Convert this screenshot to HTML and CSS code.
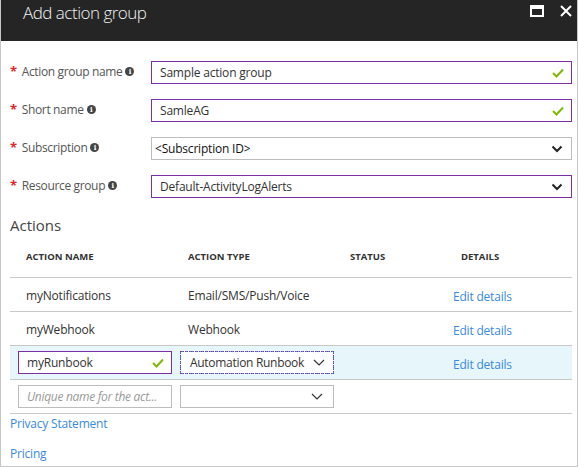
FILE: index.html
```html
<!DOCTYPE html>
<html>
<head>
<meta charset="utf-8">
<link rel="stylesheet" href="styles.css">
</head>
<body>
<div class="window">
  <header class="titlebar">
    <h1 class="title">Add action group</h1>
    <div class="controls">
      <svg class="ctl" width="14" height="12" viewBox="0 0 14 12"><rect x="1" y="1" width="12" height="10" fill="none" stroke="#fff" stroke-width="2"/><rect x="1" y="1" width="12" height="3" fill="#fff"/></svg>
      <svg class="ctl" width="12" height="12" viewBox="0 0 12 12"><path d="M1 1 L11 11 M11 1 L1 11" stroke="#fff" stroke-width="2"/></svg>
    </div>
  </header>

  <div class="content">
    <div class="form">
      <div class="frow">
        <div class="label"><span class="req">*</span>Action group name<span class="info">i</span></div>
        <div class="field active"><span class="val">Sample action group</span><svg class="check" width="12" height="10" viewBox="0 0 12 10"><path d="M1 5 L4.5 8.5 L11 1.5" fill="none" stroke="#7fba00" stroke-width="2"/></svg></div>
      </div>
      <div class="frow">
        <div class="label"><span class="req">*</span>Short name<span class="info">i</span></div>
        <div class="field active"><span class="val">SamleAG</span><svg class="check" width="12" height="10" viewBox="0 0 12 10"><path d="M1 5 L4.5 8.5 L11 1.5" fill="none" stroke="#7fba00" stroke-width="2"/></svg></div>
      </div>
      <div class="frow">
        <div class="label"><span class="req">*</span>Subscription<span class="info">i</span></div>
        <div class="field plain"><span class="val sub">&lt;Subscription ID&gt;</span><svg class="chev" width="12" height="8" viewBox="0 0 12 8"><path d="M1.5 1.5 L6 6 L10.5 1.5" fill="none" stroke="#222" stroke-width="2"/></svg></div>
      </div>
      <div class="frow">
        <div class="label"><span class="req">*</span>Resource group<span class="info">i</span></div>
        <div class="field active"><span class="val">Default-ActivityLogAlerts</span><svg class="chev" width="12" height="8" viewBox="0 0 12 8"><path d="M1.5 1.5 L6 6 L10.5 1.5" fill="none" stroke="#222" stroke-width="2"/></svg></div>
      </div>
    </div>

    <h2 class="section">Actions</h2>

    <div class="table">
      <div class="thead">
        <div class="c1 th">ACTION NAME</div>
        <div class="c2 th">ACTION TYPE</div>
        <div class="c3 th">STATUS</div>
        <div class="c4 th">DETAILS</div>
      </div>
      <div class="tr">
        <div class="c1 td">myNotifications</div>
        <div class="c2 td">Email/SMS/Push/Voice</div>
        <div class="c3 td"></div>
        <div class="c4"><a class="link edit">Edit details</a></div>
      </div>
      <div class="tr">
        <div class="c1 td">myWebhook</div>
        <div class="c2 td">Webhook</div>
        <div class="c3 td"></div>
        <div class="c4"><a class="link edit">Edit details</a></div>
      </div>
      <div class="tr selected">
        <div class="c1"><div class="cell-input active"><span class="val">myRunbook</span><svg class="check" width="12" height="10" viewBox="0 0 12 10"><path d="M1 5 L4.5 8.5 L11 1.5" fill="none" stroke="#7fba00" stroke-width="2"/></svg></div></div>
        <div class="c2"><div class="cell-input focus"><span class="val big">Automation Runbook</span><svg class="thin-chev" width="12" height="7" viewBox="0 0 12 7"><path d="M1 1 L6 6 L11 1" fill="none" stroke="#333" stroke-width="1.2"/></svg></div></div>
        <div class="c3"></div>
        <div class="c4"><a class="link edit">Edit details</a></div>
      </div>
      <div class="tr">
        <div class="c1"><div class="cell-input plain"><span class="ph">Unique name for the act...</span></div></div>
        <div class="c2"><div class="cell-input plain end"><svg class="thin-chev" width="12" height="7" viewBox="0 0 12 7"><path d="M1 1 L6 6 L11 1" fill="none" stroke="#333" stroke-width="1.2"/></svg></div></div>
        <div class="c3"></div>
        <div class="c4"></div>
      </div>
    </div>

    <div class="footer">
      <a class="link">Privacy Statement</a>
      <a class="link">Pricing</a>
    </div>
  </div>
</div>
</body>
</html>
```

FILE: styles.css
```css
* { box-sizing: border-box; }
html, body { margin: 0; padding: 0; background: #fff; }
body { font-family: "Open Sans", "Noto Sans", sans-serif; color: #333; }

.window {
  width: 578px;
  height: 467px;
  border: 1px solid #c6c6c6;
  border-top: 0;
  display: flex;
  flex-direction: column;
  overflow: hidden;
}

.titlebar {
  height: 41px;
  background: #252525;
  margin: 0 -1px;
  display: flex;
  align-items: flex-start;
  justify-content: space-between;
  padding: 0 6px 0 23px;
}
.title {
  margin: 0;
  font-weight: 300;
  font-size: 17px;
  line-height: 25px;
  color: #f2f2f2;
  letter-spacing: -0.5px;
}
.controls { display: flex; gap: 16px; padding-top: 5px; }
.ctl { display: block; }

.content { padding: 20px 5px 0 9px; flex: 1; }

.form { display: flex; flex-direction: column; gap: 15px; }
.frow { display: flex; align-items: center; height: 23px; }
.label {
  width: 141px;
  font-size: 12px;
  color: #555;
  display: flex;
  align-items: center;
  margin-top: -3px;
  letter-spacing: -0.35px;
  white-space: nowrap;
}
.req { color: #e0262b; font-weight: 700; margin-right: 5px; font-size: 13px; }
.info {
  display: inline-flex;
  width: 9px; height: 9px;
  border-radius: 50%;
  background: #444;
  color: #fff;
  font-size: 7px;
  font-weight: 700;
  align-items: center;
  justify-content: center;
  margin-left: 3px;
  line-height: 1;
  font-family: "DejaVu Serif", serif;
}
.field {
  flex: 1;
  height: 23px;
  border: 1px solid #bdbdbd;
  display: flex;
  align-items: center;
  justify-content: space-between;
  padding: 0 8px 0 8px;
  font-size: 12px;
  color: #333;
  letter-spacing: -0.2px;
}
.field.active { border-color: #7c2fa3; }
.field .sub { margin-left: -5px; color: #111; }
.check { display: block; margin-right: -1px; }
.chev { display: block; }

.section {
  margin: 17px 0 0 0;
  font-weight: 400;
  font-size: 15px;
  line-height: 20px;
  color: #444;
}

.table { margin-left: 0; }
.thead {
  display: flex;
  height: 43px;
  align-items: flex-end;
  padding-bottom: 14px;
  border-bottom: 1px solid #c8c8c8;
}
.th { font-size: 9.5px; font-weight: 700; color: #333; padding-left: 16px; letter-spacing: 0; }
.c1 { width: 170px; }
.c2 { width: 162px; }
.c3 { width: 111px; }
.c4 { flex: 1; }
.thead .c2, .thead .c3, .thead .c4 { padding-left: 8px; }

.tr {
  display: flex;
  height: 34px;
  align-items: center;
  border-bottom: 1px solid #c8c8c8;
}
.tr.selected { background: #e6f6fb; }
.td { font-size: 12px; color: #333; letter-spacing: -0.2px; padding-top: 1px; }
.tr .c1.td { padding-left: 16px; }
.tr .c2.td { padding-left: 8px; }
.tr > .c1:not(.td) { padding-left: 8px; }
.edit { display: block; margin-top: 4px; }

.link { color: #3a8ade; font-size: 12px; letter-spacing: -0.2px; text-decoration: none; }

.cell-input {
  width: 154px;
  height: 23px;
  border: 1px solid #bdbdbd;
  background: #fff;
  display: flex;
  align-items: center;
  justify-content: space-between;
  padding: 0 8px;
  font-size: 12px;
  letter-spacing: -0.2px;
}
.cell-input.active { border-color: #7c2fa3; }
.cell-input.focus { border: 1px dashed #2d9be0; outline: 1px dotted #8a2da5; outline-offset: -1px; padding: 0 8px 0 9px; }
.cell-input .big { font-size: 12px; letter-spacing: -0.3px; }
.cell-input.end { justify-content: flex-end; padding-right: 10px; }
.ph { color: #9a9a9a; font-style: italic; font-size: 12px; white-space: nowrap; letter-spacing: -0.3px; }
.thin-chev { display: block; }

.footer {
  display: flex;
  flex-direction: column;
  gap: 12px;
  margin-top: 1px;
  padding-left: 0;
}
.footer .link { line-height: 18px; }
```
